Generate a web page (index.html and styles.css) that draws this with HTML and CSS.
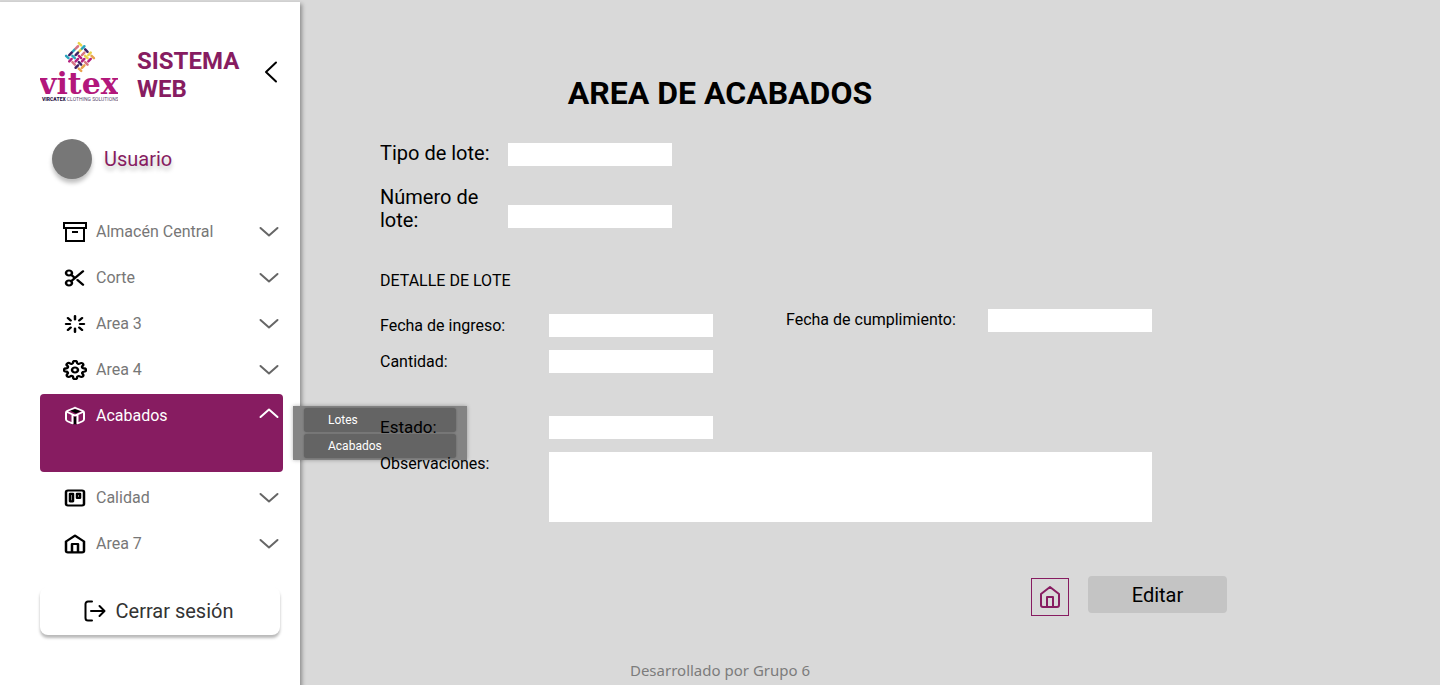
FILE: index.html
```html
<!DOCTYPE html>
<html lang="es">
<head>
<meta charset="utf-8">
<meta name="viewport" content="width=device-width, initial-scale=1">
<title>Area de acabados</title>
<link rel="stylesheet" href="styles.css">
</head>
<body>
<svg class="sprite" aria-hidden="true">
  <symbol id="down" viewBox="0 0 20 12"><path d="M1.500 2l8.500 7.500L18.500 2"/></symbol>
  <symbol id="home" viewBox="0 0 24 24" preserveAspectRatio="none"><path d="M3 9l9-7 9 7v11a2 2 0 0 1-2 2H5a2 2 0 0 1-2-2zM9 22V12h6v10"/></symbol>
</svg>
<div class="layout">
  <aside class="sidebar">
    <header class="brand">
      <svg class="logo" viewBox="0 0 78 62" role="img" aria-label="Vitex">
        <g transform="translate(40 16) rotate(45)" stroke-width="2.500" stroke-linecap="round">
          <path stroke="#e9d34b" d="M-10.700-9h3.400M-4.500-6.200v3.400M2.800-4.500h3.400M4.500-10.700v3.400"/>
          <path stroke="#2aa5bd" d="M-4.500-10.700v3.400M-9-1.700v3.400M-6.200 4.500h3.400M-10.700 9h3.400"/>
          <path stroke="#b3217e" d="M-1.700 0h3.400M0 2.800v3.400M4.500-1.700v3.400M9-6.200v3.400M-4.500 7.300v3.400"/>
          <path stroke="#3f2163" d="M-1.700-9h3.400M-4.500-1.700v3.400M-9 2.800v3.400M2.800 4.500h3.400M4.500 7.300v3.400"/>
          <path stroke="#d87582" d="M-9-6.200v3.400M0-6.200v3.400M7.300 0h3.400M-1.700 9h3.400"/>
          <path stroke="#e8a34d" d="M7.300-9h3.400M9 2.800v3.400M7.300 9h3.400"/>
        </g>
        <text class="logo-name" x="-1" y="53">vitex</text>
        <text class="logo-caption" x="2" y="60"><tspan class="logo-strong">VIRCATEX</tspan> CLOTHING SOLUTIONS</text>
      </svg>
      <strong class="brand-title">SISTEMA WEB</strong>
      <button class="collapse" type="button" aria-label="Ocultar menú"><svg width="14" height="22" viewBox="0 0 14 22"><path d="M12 1.500L2 11l10 9.500"/></svg></button>
    </header>
    <div class="user"><span class="avatar"></span><span class="user-name">Usuario</span></div>
    <nav>
      <ul class="menu">
        <li><button class="menu-item" type="button"><svg class="icon" viewBox="0 0 24 20"><path class="square" d="M3 6v13h18V6M1 1h22v5H1zM9 10h6"/></svg><span>Almacén Central</span><svg class="arrow"><use href="#down"/></svg></button></li>
        <li><button class="menu-item" type="button"><svg class="icon heavy" viewBox="0 0 24 24" preserveAspectRatio="none"><circle cx="6" cy="6" r="3"/><circle cx="6" cy="18" r="3"/><path d="M20 4L8.100 15.900M14.500 14.500L20 20M8.100 8.100L12 12"/></svg><span>Corte</span><svg class="arrow"><use href="#down"/></svg></button></li>
        <li><button class="menu-item" type="button"><svg class="icon heavy" viewBox="0 0 24 24" preserveAspectRatio="none"><path d="M12 2.500v4M12 17.500v4M4.900 4.900l2.800 2.800M16.200 16.200l2.900 2.900M3 12h4M17 12h4M4.900 19.100l2.800-2.900M16.200 7.700l2.900-2.800"/></svg><span>Area 3</span><svg class="arrow"><use href="#down"/></svg></button></li>
        <li><button class="menu-item" type="button"><svg class="icon heavy" viewBox="0 0 24 24" preserveAspectRatio="none"><circle cx="12" cy="12" r="3"/><path d="M19.400 15a1.650 1.650 0 0 0 .33 1.820l.06.06a2 2 0 1 1-2.830 2.830l-.06-.06a1.650 1.650 0 0 0-2.800 1.170V21a2 2 0 0 1-4 0v-.09a1.650 1.650 0 0 0-2.900-1.260l-.06.06a2 2 0 1 1-2.830-2.830l.06-.06A1.650 1.650 0 0 0 3.090 14H3a2 2 0 0 1 0-4h.09a1.650 1.650 0 0 0 1.260-2.900l-.06-.06a2 2 0 1 1 2.830-2.830l.06.06A1.650 1.650 0 0 0 10 3.090V3a2 2 0 0 1 4 0v.09a1.650 1.650 0 0 0 2.820 1.180l.06-.06a2 2 0 1 1 2.830 2.830l-.06.06A1.650 1.650 0 0 0 20.910 10H21a2 2 0 0 1 0 4h-.09a1.650 1.650 0 0 0-1.510 1z"/></svg><span>Area 4</span><svg class="arrow"><use href="#down"/></svg></button></li>
        <li class="active">
          <button class="menu-item" type="button" aria-expanded="true"><svg class="icon" viewBox="0 0 24 24" preserveAspectRatio="none"><path class="dark" d="M7 5.500L12 4l6 2-5 3zM10.500 13h3v9h-3z"/><path d="M12 2l7.500 3.600Q21 6.300 21 8v8q0 1.600-1.500 2.400L15 20.600M9 20.600l-4.500-2.200Q3 17.600 3 16V8q0-1.700 1.500-2.400L12 2M3.500 7L12 11.500 20.500 7M9.500 11v10M14.500 11v10"/></svg><span>Acabados</span><svg class="arrow up"><use href="#down"/></svg></button>
          <div class="submenu"><button type="button">Lotes</button><button type="button">Acabados</button></div>
        </li>
        <li><button class="menu-item" type="button"><svg class="icon heavy" viewBox="0 0 24 24" preserveAspectRatio="none"><rect x="3" y="3" width="18" height="18" rx="2"/><path d="M7 7h3v9H7zM14 7h3v5h-3z"/></svg><span>Calidad</span><svg class="arrow"><use href="#down"/></svg></button></li>
        <li><button class="menu-item" type="button"><svg class="icon heavy"><use href="#home"/></svg><span>Area 7</span><svg class="arrow"><use href="#down"/></svg></button></li>
      </ul>
    </nav>
    <button class="logout" type="button"><svg width="22" height="22" viewBox="0 0 22 22"><path d="M8 1.500H4a2.500 2.500 0 0 0-2.500 2.500v14A2.500 2.500 0 0 0 4 20.500h4M7 11h13M15.500 6l5 5-5 5"/></svg>Cerrar sesión</button>
  </aside>
  <main class="main">
    <h1>AREA DE ACABADOS</h1>
    <form class="form">
      <div class="lot"><label for="tipo">Tipo de lote:</label><input id="tipo" type="text"></div>
      <div class="lot lot-number"><label for="numero">Número de lote:</label><input id="numero" type="text"></div>
      <h2>DETALLE DE LOTE</h2>
      <div class="dates">
        <div class="field entry"><label for="ingreso">Fecha de ingreso:</label><input id="ingreso" type="text"></div>
        <div class="field due"><label for="cumplimiento">Fecha de cumplimiento:</label><input id="cumplimiento" type="text"></div>
      </div>
      <div class="field"><label for="cantidad">Cantidad:</label><input id="cantidad" type="text"></div>
      <div class="field state"><label for="estado">Estado:</label><input id="estado" type="text"></div>
      <div class="field notes"><label for="observaciones">Observaciones:</label><textarea id="observaciones"></textarea></div>
      <div class="actions">
        <button class="home" type="button" aria-label="Inicio"><svg><use href="#home"/></svg></button>
        <button class="edit" type="button">Editar</button>
      </div>
    </form>
    <footer>Desarrollado por Grupo 6</footer>
  </main>
</div>
</body>
</html>
```
FILE: styles.css
```css
* { box-sizing: border-box; }
body { margin: 0; background: #d9d9d9; color: #000; font: 16px/24px Roboto, sans-serif; }
button, input, textarea { margin: 0; padding: 0; border: 0; border-radius: 0; font: inherit; color: inherit; }
button { background: none; cursor: pointer; }
svg { fill: none; stroke: currentColor; stroke-width: 2; stroke-linecap: round; stroke-linejoin: round; }
.sprite { position: absolute; width: 0; height: 0; }
.layout { display: flex; min-height: 100vh; }

.sidebar { flex: 0 0 300px; margin-top: 2px; padding: 39px 17px 0 40px; background: #fff; box-shadow: 0 4px 4px 2px rgba(0, 0, 0, .35); }
.brand { display: flex; align-items: center; height: 62px; }
.logo { flex: none; width: 78px; height: 62px; stroke: none; }
.logo-name { font: bold 30px "DejaVu Serif", serif; fill: #b3177b; }
.logo-caption { font: 5px Roboto, sans-serif; fill: #5b4a70; }
.logo-strong { font-weight: 900; fill: #2c1748; }
.brand-title { width: 110px; margin-left: 19px; padding-top: 6px; color: #871c61; font-size: 24px; line-height: 28px; }
.collapse { display: flex; margin-left: auto; padding-right: 5px; }
.user { display: flex; align-items: center; gap: 12px; margin: 36px 0 30px 12px; }
.avatar { width: 40px; height: 40px; border-radius: 50%; background: #777; box-shadow: 0 4px 4px rgba(0, 0, 0, .25); }
.user-name { color: #871c61; font-size: 20px; text-shadow: 0 4px 4px rgba(0, 0, 0, .25); }

.menu { margin: 0; padding: 0; list-style: none; color: #777; }
.menu-item { display: flex; align-items: center; gap: 9px; width: 100%; height: 46px; padding: 0 4px 0 23px; text-align: left; }
.icon { width: 24px; height: 20px; color: #000; }
.heavy { stroke-width: 2.5; }
.square { stroke-linecap: butt; stroke-linejoin: miter; }
.dark { fill: #000; stroke: none; }
.arrow { width: 20px; height: 12px; margin-left: auto; color: #666; }
.up { transform: scaleY(-1); margin-bottom: 6px; }
.active { position: relative; height: 78px; margin: 1px 0 3px; border-radius: 4px; background: #871c61; color: #fff; }
.active .menu-item { height: 43px; }
.active .icon, .active .arrow { color: #fff; }
.submenu { position: absolute; z-index: 1; top: 12px; left: 253px; display: grid; gap: 2px; width: 174px; padding: 2px 11px; background: #848484; box-shadow: 0 0 4px rgba(0, 0, 0, .3); }
.submenu button { height: 24px; padding-left: 24px; border-radius: 3px; background: #646464; box-shadow: 0 0 2px rgba(0, 0, 0, .3); font-size: 12px; text-align: left; }
.logout { display: flex; align-items: center; justify-content: center; gap: 10px; width: 240px; height: 48px; margin-top: 20px; padding-right: 3px; border-radius: 8px; background: #fff; box-shadow: 0 3px 3px rgba(0, 0, 0, .28); color: #333; font-size: 20px; }
.logout svg { color: #000; }

.main { flex: 1; min-width: 0; display: flex; flex-direction: column; padding: 74px 40px 2px 80px; }
h1 { margin: 0 260px 30px -80px; font-size: 32px; line-height: 38px; text-align: center; }
label { position: relative; z-index: 2; }
input { height: 23px; width: 164px; padding: 0 6px; background: #fff; }
.form { max-width: 847px; }
.lot { display: grid; grid-template-columns: 112px 164px; gap: 16px; align-items: center; font-size: 20px; line-height: 23px; }
.lot label { padding-bottom: 2px; }
.lot-number { align-items: end; margin-top: 19px; }
.lot-number label { padding: 0; }
.lot-number input { margin-bottom: 4px; }
h2 { margin: 37px 0 15px; font-size: 16px; font-weight: 400; line-height: 24px; }
.field { display: grid; grid-template-columns: 169px 164px; align-items: center; margin-bottom: 13px; }
.field label { line-height: 23px; }
.dates { display: flex; align-items: flex-start; gap: 73px; }
.entry { margin-top: 6px; }
.due { grid-template-columns: 202px 164px; margin-bottom: 19px; }
.due label { line-height: 24px; }
.dates .field { height: 23px; }
.state { margin-top: 43px; }
.state label { font-size: 17px; }
.notes { grid-template-columns: 169px minmax(0, 603px); align-items: start; margin-bottom: 0; }
textarea { height: 70px; padding: 6px; background: #fff; resize: none; }
.actions { display: flex; justify-content: flex-end; align-items: flex-start; gap: 19px; margin-top: 54px; }
.home { display: grid; place-items: center; width: 38px; height: 38px; margin-top: 2px; border: 1px solid #871c61; color: #871c61; }
.home svg { width: 24px; height: 24px; }
.edit { width: 139px; height: 37px; border-radius: 4px; background: #c4c4c4; font-size: 20px; line-height: 22px; }
footer { margin: auto 260px 0 -80px; color: #7c7c7c; font: 15px/26px "Noto Sans", sans-serif; text-align: center; }
```
